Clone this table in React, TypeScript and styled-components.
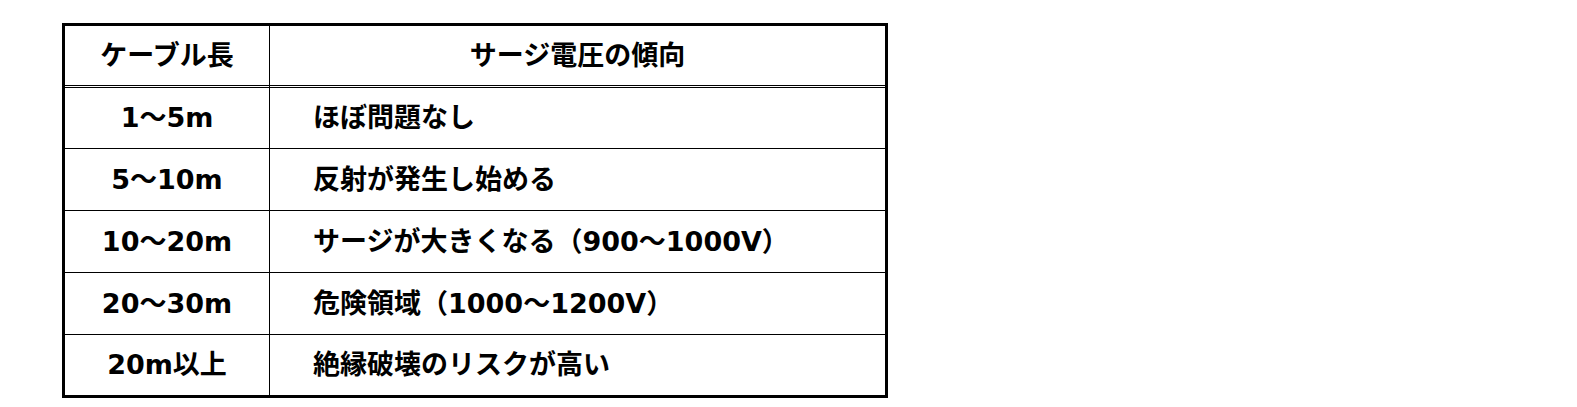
import styled, { createGlobalStyle } from 'styled-components';

const GlobalStyle = createGlobalStyle`
  html, body {
    margin: 0;
    padding: 0;
    background: #ffffff;
  }
  body {
    font-family: "DejaVu Sans", "Noto Sans CJK JP", sans-serif;
    color: #000000;
  }
`;

const Page = styled.div`
  padding: 23px 0 0 62px;
`;

const Table = styled.div`
  box-sizing: border-box;
  width: 826px;
  display: grid;
  grid-template-columns: 205px 1fr;
  border: 3px solid #000;
`;

const Cell = styled.div<{ $h: number; $head?: boolean; $first?: boolean; $last?: boolean; $left?: boolean }>`
  box-sizing: border-box;
  height: ${(p) => p.$h}px;
  display: flex;
  align-items: center;
  justify-content: ${(p) => (p.$left ? 'flex-start' : 'center')};
  padding: 0 0 5px ${(p) => (p.$left ? '43px' : '0')};
  border-right: ${(p) => (p.$first ? '1px solid #000' : 'none')};
  border-bottom: ${(p) => (p.$head ? '3px double #000' : p.$last ? 'none' : '1px solid #000')};
  font-size: 27px;
  font-weight: 700;
  white-space: nowrap;
`;

const rows: [string, string, number][] = [
  ['1～5m', 'ほぼ問題なし', 61],
  ['5～10m', '反射が発生し始める', 62],
  ['10～20m', 'サージが大きくなる（900～1000V）', 62],
  ['20～30m', '危険領域（1000～1200V）', 62],
  ['20m以上', '絶縁破壊のリスクが高い', 60],
];

export default function App() {
  return (
    <Page>
      <GlobalStyle />
      <Table>
        <Cell $h={62} $head $first>ケーブル長</Cell>
        <Cell $h={62} $head>サージ電圧の傾向</Cell>
        {rows.map(([len, trend, h], i) => {
          const last = i === rows.length - 1;
          return [
            <Cell key={`l${i}`} $h={h} $first $last={last}>{len}</Cell>,
            <Cell key={`t${i}`} $h={h} $left $last={last}>{trend}</Cell>,
          ];
        })}
      </Table>
    </Page>
  );
}
